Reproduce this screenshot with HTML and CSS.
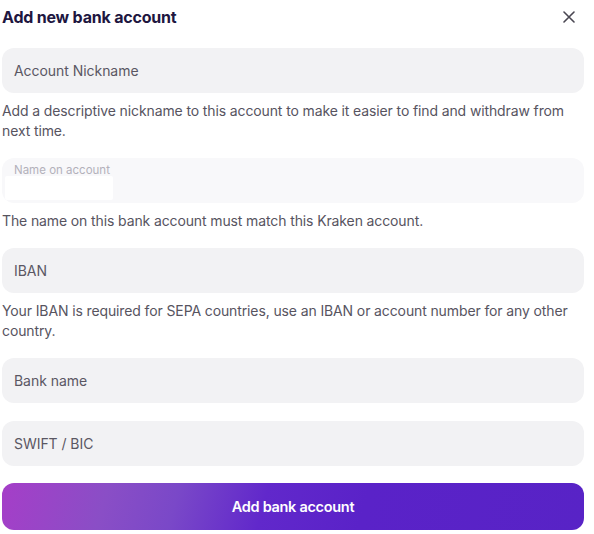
FILE: index.html
```html
<!DOCTYPE html>
<html lang="en">
<head>
<meta charset="utf-8">
<title>Add new bank account</title>
<link rel="stylesheet" href="styles.css">
</head>
<body>
<div class="modal">
  <div class="header">
    <h1 class="title">Add new bank account</h1>
    <button class="close" aria-label="Close">
      <svg width="12" height="12" viewBox="0 0 12 12"><path d="M1 1L11 11M11 1L1 11" stroke="#4a4752" stroke-width="1.6" stroke-linecap="round"/></svg>
    </button>
  </div>
  <div class="field"><span class="placeholder">Account Nickname</span></div>
  <p class="help">Add a descriptive nickname to this account to make it easier to find and withdraw from next time.</p>
  <div class="field field-light">
    <span class="label-small">Name on account</span>
    <span class="autofill"></span>
  </div>
  <p class="help">The name on this bank account must match this Kraken account.</p>
  <div class="field"><span class="placeholder">IBAN</span></div>
  <p class="help">Your IBAN is required for SEPA countries, use an IBAN or account number for any other country.</p>
  <div class="field"><span class="placeholder">Bank name</span></div>
  <div class="field field-next"><span class="placeholder">SWIFT / BIC</span></div>
  <button class="submit">Add bank account</button>
</div>
</body>
</html>
```

FILE: styles.css
```css
* { box-sizing: border-box; }
body {
  margin: 0;
  background: #ffffff;
  font-family: Inter, "Noto Sans", sans-serif;
}
.modal {
  width: 584px;
  padding: 0 0 0 2px;
  display: flex;
  flex-direction: column;
}
.header {
  height: 34px;
  display: flex;
  align-items: center;
  justify-content: space-between;
  margin-bottom: 14px;
}
.title {
  margin: 0;
  font-size: 16px;
  font-weight: 700;
  color: #20163f;
  letter-spacing: -0.2px;
}
.close {
  border: 0;
  background: none;
  padding: 0;
  width: 12px;
  height: 12px;
  margin-right: 9px;
  display: flex;
}
.field {
  height: 45px;
  border-radius: 12px;
  background: #f2f2f4;
  display: flex;
  align-items: center;
  padding: 0 12px;
  position: relative;
}
.field-light {
  background: #f8f8fa;
  align-items: flex-start;
  flex-direction: column;
  justify-content: flex-start;
  padding: 6px 3px 3px 3px;
}
.field-next { margin-top: 18px; }
.placeholder {
  font-size: 14px;
  color: #5a5763;
  letter-spacing: -0.05px;
}
.label-small {
  font-size: 11.5px;
  color: #b3b1ba;
  padding-left: 9px;
  line-height: 13px;
}
.autofill {
  width: 108px;
  height: 25px;
  background: #ffffff;
  border-radius: 2px;
  margin-top: -1px;
}
.help {
  margin: 8px 0 17px;
  font-size: 14px;
  line-height: 20px;
  color: #57545f;
  letter-spacing: -0.12px;
}
.submit {
  margin-top: 17px;
  height: 47px;
  border: 0;
  border-radius: 12px;
  background: linear-gradient(105deg, #a53ec8 0%, #8a4ec6 18%, #7a48c8 30%, #6128cb 45%, #5a22c8 62%, #5823c6 100%);
  color: #ffffff;
  font-family: Inter, "Noto Sans", sans-serif;
  font-size: 14.5px;
  font-weight: 600;
  letter-spacing: -0.3px;
}
```
